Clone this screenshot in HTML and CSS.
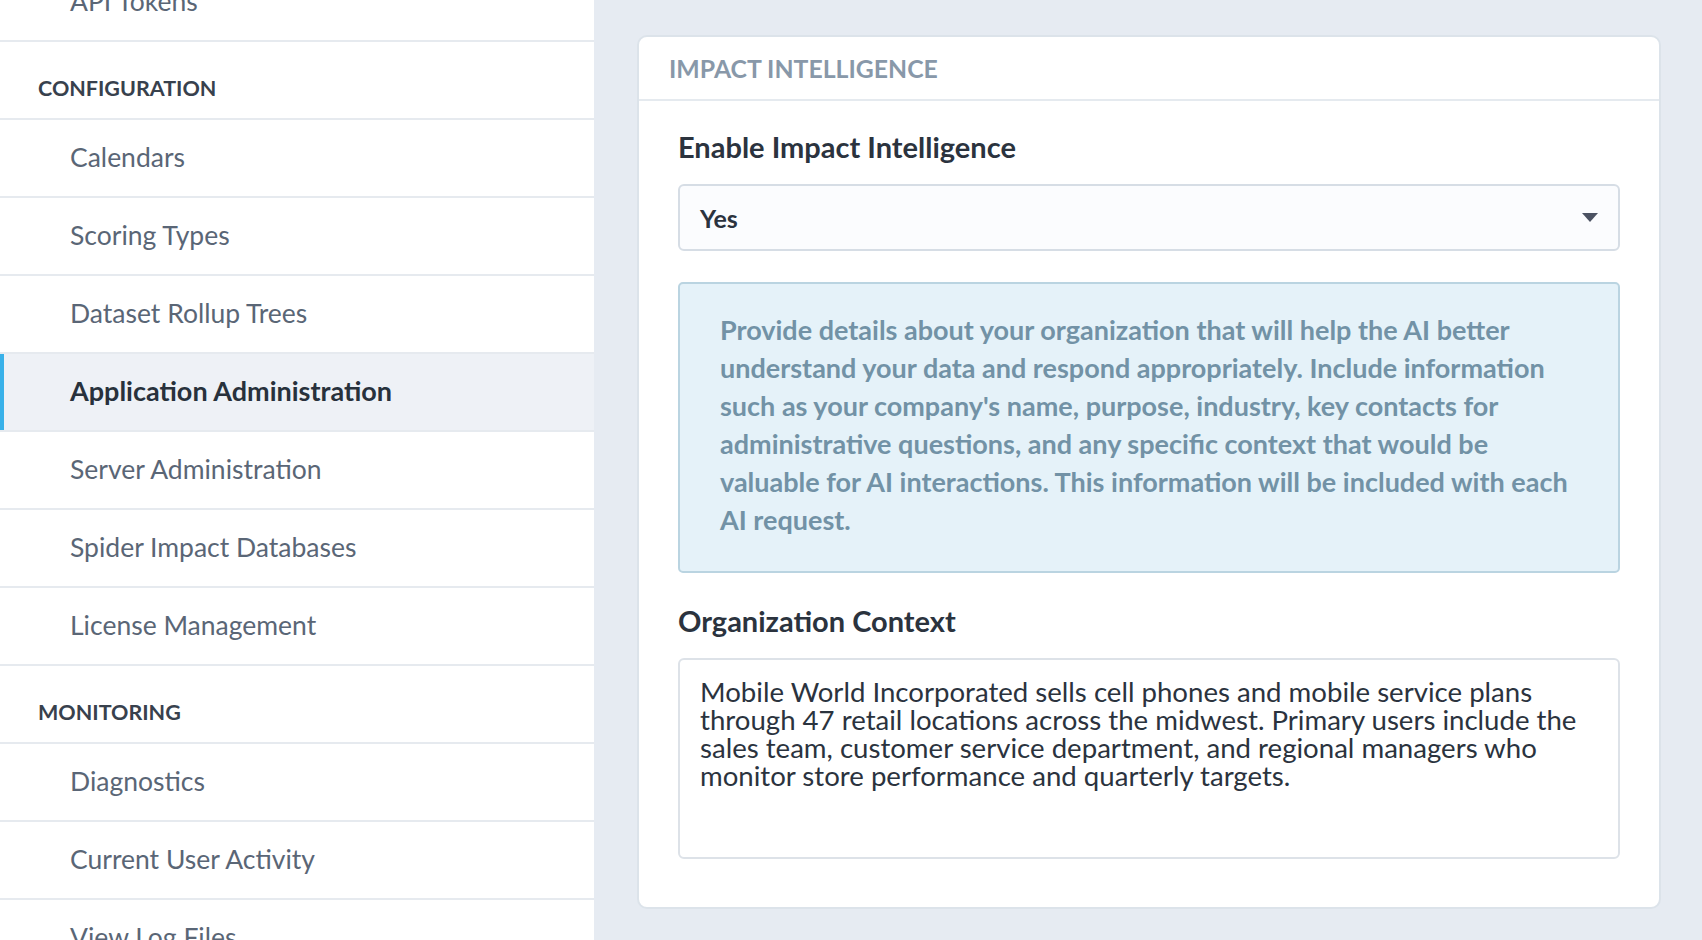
FILE: index.html
```html
<!DOCTYPE html>
<html lang="en">
<head>
<meta charset="utf-8">
<title>Application Administration</title>
<link rel="stylesheet" href="styles.css">
</head>
<body>
<div class="layout">
  <nav class="sidebar">
    <ul class="nav-list">
      <li class="nav-item">API Tokens</li>
      <li class="nav-heading">CONFIGURATION</li>
      <li class="nav-item">Calendars</li>
      <li class="nav-item">Scoring Types</li>
      <li class="nav-item">Dataset Rollup Trees</li>
      <li class="nav-item active">Application Administration</li>
      <li class="nav-item">Server Administration</li>
      <li class="nav-item">Spider Impact Databases</li>
      <li class="nav-item">License Management</li>
      <li class="nav-heading">MONITORING</li>
      <li class="nav-item">Diagnostics</li>
      <li class="nav-item">Current User Activity</li>
      <li class="nav-item">View Log Files</li>
    </ul>
  </nav>
  <main class="main">
    <section class="card">
      <header class="card-header">IMPACT INTELLIGENCE</header>
      <div class="card-body">
        <label class="field-label">Enable Impact Intelligence</label>
        <div class="select">
          <span class="select-value">Yes</span>
          <svg class="caret" width="16" height="9" viewBox="0 0 16 9"><path d="M0 0 H16 L8 9 Z" fill="#4b5262"/></svg>
        </div>
        <div class="info-box">Provide details about your organization that will help the AI better understand your data and respond appropriately. Include information such as your company's name, purpose, industry, key contacts for administrative questions, and any specific context that would be valuable for AI interactions. This information will be included with each AI request.</div>
        <label class="field-label">Organization Context</label>
        <textarea class="textarea">Mobile World Incorporated sells cell phones and mobile service plans through 47 retail locations across the midwest. Primary users include the sales team, customer service department, and regional managers who monitor store performance and quarterly targets.</textarea>
      </div>
    </section>
  </main>
</div>
</body>
</html>
```

FILE: styles.css
```css
* { box-sizing: border-box; }
html, body { margin: 0; padding: 0; }
body {
  font-family: Lato, "Noto Sans", sans-serif;
  background: #e6ebf2;
  height: 940px;
  overflow: hidden;
}
.layout {
  display: flex;
  height: 940px;
}
.sidebar {
  width: 594px;
  flex: none;
  background: #ffffff;
  overflow: hidden;
}
.nav-list {
  list-style: none;
  margin: -36px 0 0 0;
  padding: 0;
}
.nav-item {
  height: 78px;
  display: flex;
  align-items: center;
  padding-left: 70px;
  padding-bottom: 3px;
  font-size: 26.5px;
  color: #5a6676;
  border-bottom: 2px solid #e6eaef;
}
.nav-item.active {
  background: #eef1f6;
  color: #28313c;
  font-weight: 700;
  font-size: 27px;
  box-shadow: inset 4px 0 0 #39b1e9;
}
.nav-heading {
  height: 78px;
  display: flex;
  align-items: center;
  padding-left: 38px;
  padding-top: 16px;
  font-size: 21.5px;
  font-weight: 700;
  color: #38414d;
  border-bottom: 2px solid #e6eaef;
}
.main {
  flex: 1;
  padding: 35px 41px 0 43px;
}
.card {
  background: #ffffff;
  border: 2px solid #dce3ea;
  border-radius: 10px;
}
.card-header {
  height: 64px;
  display: flex;
  align-items: center;
  padding-left: 30px;
  font-size: 24.8px;
  font-weight: 700;
  color: #8898a9;
  border-bottom: 2px solid #e5eaef;
}
.card-body {
  padding: 28px 39px 48px 39px;
  display: flex;
  flex-direction: column;
}
.field-label {
  font-size: 29px;
  line-height: 36px;
  font-weight: 700;
  color: #2b333e;
  margin-bottom: 19px;
}
.select {
  height: 67px;
  border: 2px solid #d6dde5;
  border-radius: 6px;
  background: #fbfcfe;
  display: flex;
  align-items: center;
  justify-content: space-between;
  padding: 0 20px 0 20px;
  margin-bottom: 31px;
}
.select-value {
  font-size: 25px;
  font-weight: 700;
  color: #2b333e;
}
.caret { display: block; }
.info-box {
  background: #e5f2f9;
  border: 2px solid #bad4e1;
  border-radius: 5px;
  padding: 27px 40px 32px 40px;
  font-size: 27px;
  line-height: 38px;
  font-weight: 700;
  color: #7292a6;
  margin-bottom: 30px;
}
.textarea {
  height: 201px;
  border: 2px solid #dde2e8;
  border-radius: 6px;
  background: #ffffff;
  padding: 18px 20px;
  font-family: Lato, "Noto Sans", sans-serif;
  font-size: 27.6px;
  line-height: 28px;
  color: #2b333e;
  resize: none;
  outline: none;
}
```
